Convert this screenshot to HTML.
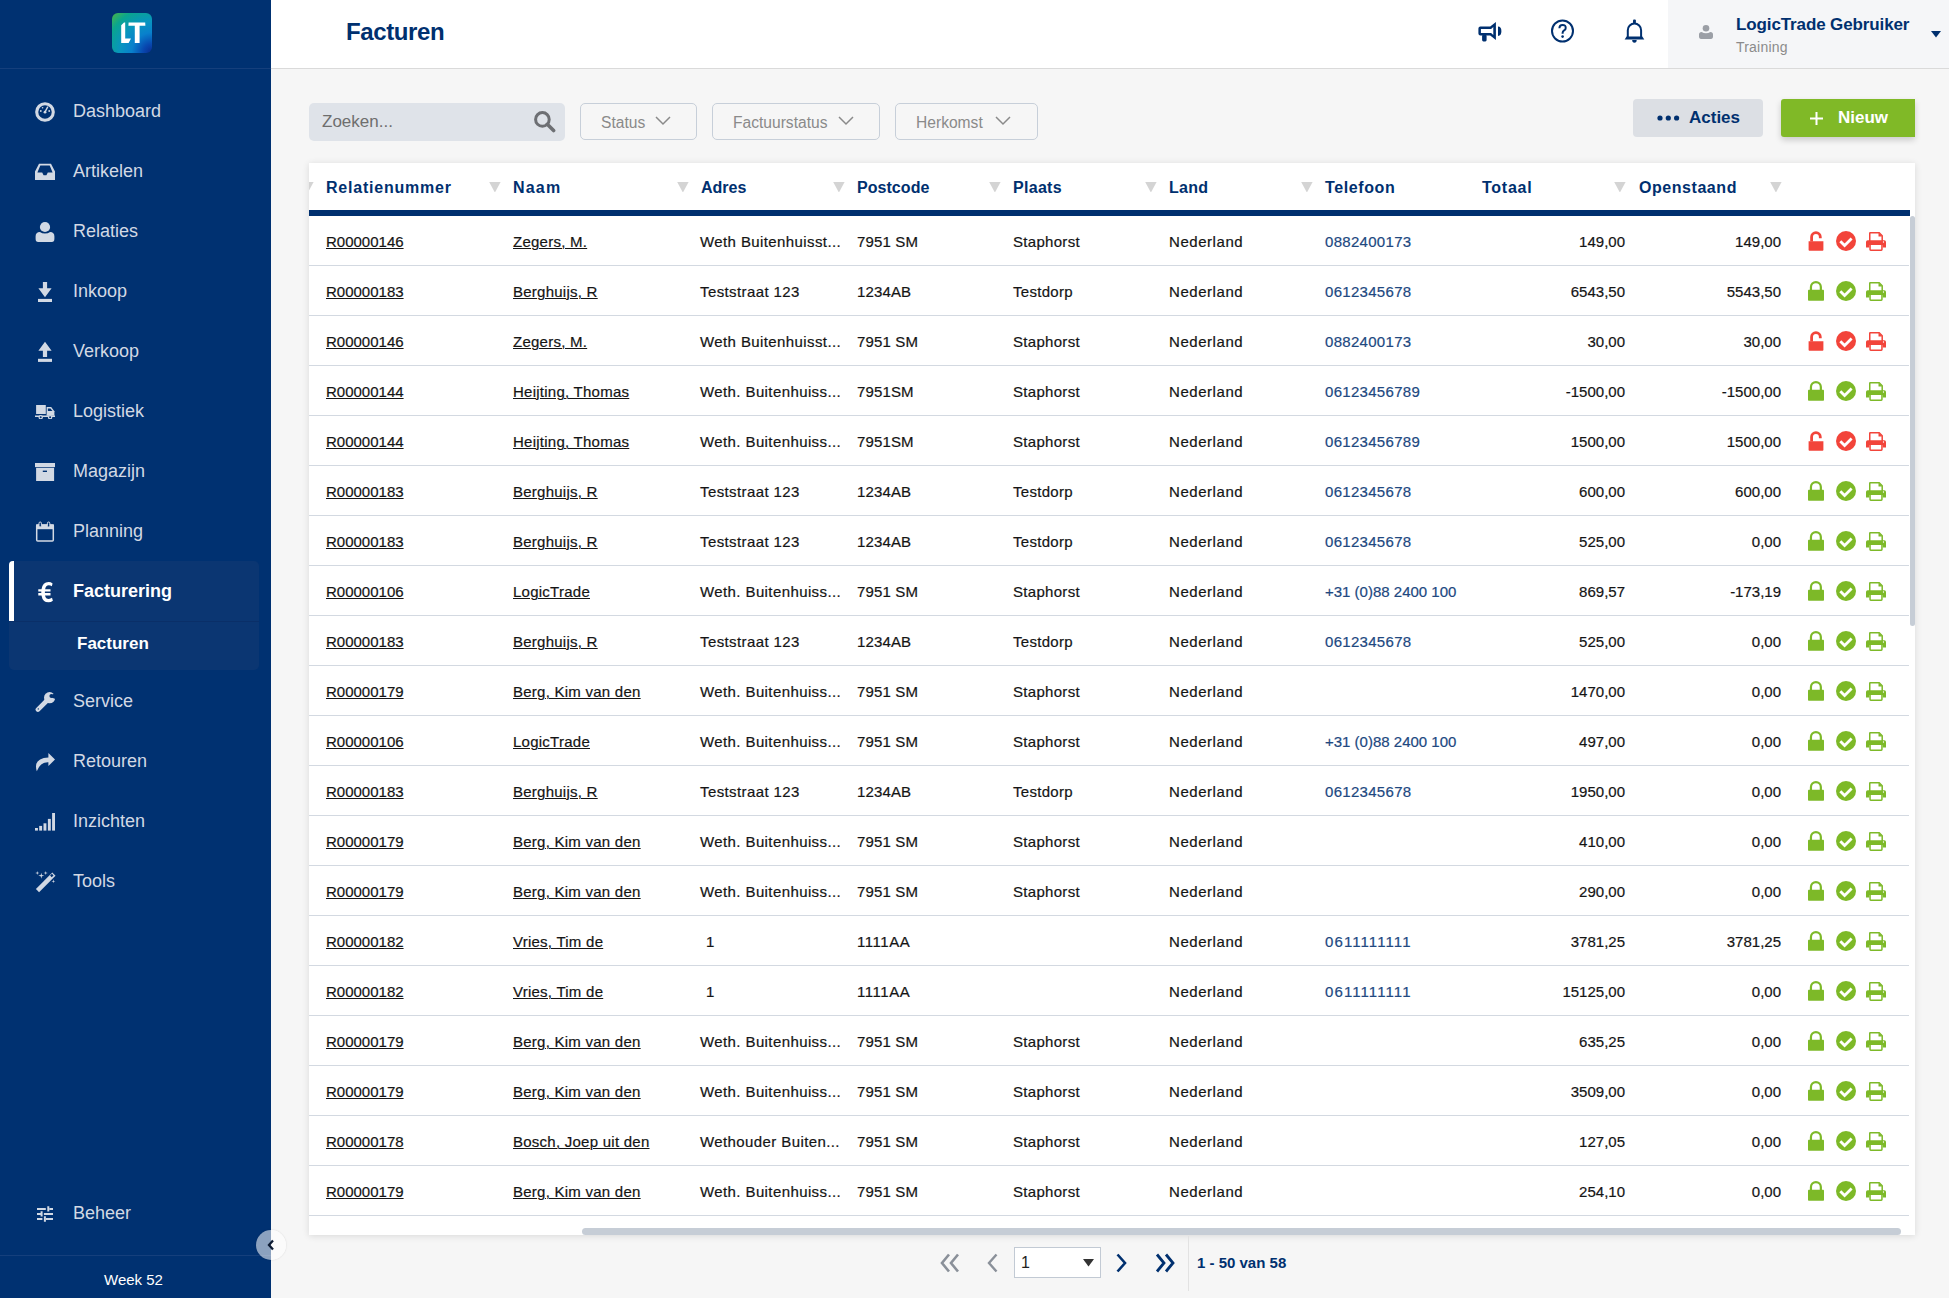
<!DOCTYPE html>
<html><head><meta charset="utf-8"><title>Facturen</title>
<style>
*{box-sizing:border-box;margin:0;padding:0}
html,body{width:1949px;height:1298px;overflow:hidden}
body{font-family:"Liberation Sans",sans-serif;background:#f6f6f6;position:relative;color:#1d1d1d}
.abs{position:absolute}
#side{position:absolute;left:0;top:0;width:271px;height:1298px;background:#003171}
#side .sep{position:absolute;left:0;width:271px;height:1px;background:#153f7c}
.nav{position:absolute;left:0;width:271px;height:60px;line-height:60px;font-size:18px;color:#d2d9e4;white-space:nowrap}
.nav .ico{position:absolute;left:35px;top:0;width:20px;height:60px;display:flex;align-items:center;justify-content:center}
.nav .lbl{position:absolute;left:73px;top:0}
#active{position:absolute;left:9px;top:561px;width:250px;height:109px;background:#0b3672;border-radius:5px}
#active .bar{position:absolute;left:0;top:0;width:5px;height:60px;background:#fff;border-radius:4px 0 0 0}
#active .sub{position:absolute;left:0;top:60px;width:250px;height:1px;background:#0a2f68}
#hdr{position:absolute;left:271px;top:0;width:1678px;height:69px;background:#fff;border-bottom:1px solid #dadada}
#user{position:absolute;left:1668px;top:0;width:281px;height:68px;background:#f5f6f8}
.flt{position:absolute}
#card{position:absolute;left:309px;top:163px;width:1606px;height:1072px;background:#fff;box-shadow:0 1px 7px rgba(0,0,0,.12)}
.th{position:absolute;top:164px;height:47px;line-height:47px;font-weight:700;font-size:16px;color:#00306f;white-space:nowrap}
.row{position:absolute;left:309px;width:1600px;height:50px;border-bottom:1px solid #d3d9e1}
.c{position:absolute;top:1px;height:49px;line-height:50px;font-size:15px;white-space:nowrap;color:#151515;-webkit-text-stroke:.2px currentColor}
.t{letter-spacing:.4px}
.u{text-decoration:underline;text-underline-offset:1px;text-decoration-thickness:1px}
.ph{color:#21487f}
.num{text-align:right}
.icos{position:absolute;top:0;height:49px}
.icos svg{position:absolute}
</style></head><body>

<div id="side">
<div class="abs" style="left:112px;top:13px;width:40px;height:40px;border-radius:6px;background:radial-gradient(circle at 100% 100%, #0a2a8c 0%, #0848b0 16%, #0880cc 36%, #0894c0 56%, #0aa58e 80%, #4cb444 100%)"></div>
<svg class="abs" style="left:120px;top:21px" width="26" height="23" viewBox="0 0 26 23"><path d="M1.2 4.2L4 1.4H5.2V17.5h5.8L8.6 21.9H1.2z" fill="#fff"/><path d="M8.6 1.4h16.6l0.2 3.4h-5.8v17.1h-4.8V4.8H8.4z" fill="#fff"/></svg>
<div class="sep" style="top:68px"></div>
<div id="active"><div class="bar"></div><div class="sub"></div></div>
<div class="nav" style="top:81px;"><div class="lbl">Dashboard</div></div>
<div class="nav" style="top:141px;"><div class="lbl">Artikelen</div></div>
<div class="nav" style="top:201px;"><div class="lbl">Relaties</div></div>
<div class="nav" style="top:261px;"><div class="lbl">Inkoop</div></div>
<div class="nav" style="top:321px;"><div class="lbl">Verkoop</div></div>
<div class="nav" style="top:381px;"><div class="lbl">Logistiek</div></div>
<div class="nav" style="top:441px;"><div class="lbl">Magazijn</div></div>
<div class="nav" style="top:501px;"><div class="lbl">Planning</div></div>
<div class="nav" style="top:561px;color:#fff;font-weight:700;"><div class="lbl">Facturering</div></div>
<div class="nav" style="top:671px;"><div class="lbl">Service</div></div>
<div class="nav" style="top:731px;"><div class="lbl">Retouren</div></div>
<div class="nav" style="top:791px;"><div class="lbl">Inzichten</div></div>
<div class="nav" style="top:851px;"><div class="lbl">Tools</div></div>
<div class="nav" style="top:1183px;"><div class="lbl">Beheer</div></div>
<svg class="abs" style="left:35px;top:102px" width="20" height="20" viewBox="0 0 20 20"><circle cx="10" cy="10" r="8.3" fill="none" stroke="#d2d9e4" stroke-width="3.1"/><path d="M12.6 5.2L10.2 9.6" stroke="#d2d9e4" stroke-width="1.4" stroke-linecap="round"/><circle cx="10" cy="10.2" r="1.4" fill="#d2d9e4"/><circle cx="5.8" cy="9" r=".9" fill="#d2d9e4"/><circle cx="14.2" cy="9" r=".9" fill="#d2d9e4"/><circle cx="7.6" cy="5.8" r=".8" fill="#d2d9e4"/></svg>
<svg class="abs" style="left:35px;top:163px" width="20" height="18" viewBox="0 0 20 18"><path d="M4 0.7h12L20 8.5V17H0V8.5z M5.3 2.6L2.4 9.6h4.8l1.4 2.6h2.8l1.4-2.6h4.8L14.7 2.6z" fill="#d2d9e4" fill-rule="evenodd"/></svg>
<svg class="abs" style="left:35px;top:221px" width="20" height="22" viewBox="0 0 20 22"><circle cx="10" cy="6" r="5.1" fill="#d2d9e4"/><path d="M0.6 15.5q0-4.5 4.3-4.5 2.2 1.6 5.1 1.6t5.1-1.6q4.3 0 4.3 4.5v2.3q0 3.2-2.6 3.2H3.2Q0.6 21 0.6 17.8z" fill="#d2d9e4"/></svg>
<svg class="abs" style="left:38px;top:281px" width="14" height="22" viewBox="0 0 14 22"><path d="M4.9 0.9h4.2v6.3h4.5L7 16.2 0.4 7.2h4.5z" fill="#d2d9e4"/><rect x="0" y="17.9" width="14" height="3.1" fill="#d2d9e4"/></svg>
<svg class="abs" style="left:38px;top:341px" width="14" height="22" viewBox="0 0 14 22"><path d="M7 0.8l6.6 9H9.1v6.3H4.9V9.8H0.4z" fill="#d2d9e4"/><rect x="0" y="17.8" width="14" height="3.1" fill="#d2d9e4"/></svg>
<svg class="abs" style="left:35px;top:404px" width="20" height="15" viewBox="0 0 20 15"><rect x="1.1" y="1" width="9.7" height="9" fill="#d2d9e4"/><path d="M11.6 3.1h4.6l3.2 4.2V11.8H11.6z" fill="#d2d9e4"/><path d="M12.9 4.5h2.6l2 2.6h-4.6z" fill="#003171"/><rect x="0" y="11.5" width="20" height="1.5" fill="#d2d9e4"/><circle cx="5.7" cy="13.2" r="1.6" fill="#003171" stroke="#d2d9e4" stroke-width="1.2"/><circle cx="15.1" cy="13.2" r="1.6" fill="#003171" stroke="#d2d9e4" stroke-width="1.2"/></svg>
<svg class="abs" style="left:35px;top:463px" width="20" height="18" viewBox="0 0 20 18"><rect x="0" y="0" width="20" height="4.1" fill="#d2d9e4"/><rect x="1.1" y="4.8" width="18" height="13.2" fill="#d2d9e4"/><rect x="7.8" y="7.6" width="4.2" height="1.4" fill="#003171"/></svg>
<svg class="abs" style="left:35px;top:521px" width="20" height="21" viewBox="0 0 20 21"><rect x="1.7" y="4" width="16.6" height="16" rx="1" fill="none" stroke="#d2d9e4" stroke-width="1.5"/><rect x="1" y="3.4" width="18" height="4.8" fill="#d2d9e4"/><rect x="4" y="1" width="2.4" height="5" rx="1.2" fill="#003171" stroke="#d2d9e4" stroke-width="1"/><rect x="12.4" y="1" width="2.4" height="5" rx="1.2" fill="#003171" stroke="#d2d9e4" stroke-width="1"/></svg>
<svg class="abs" style="left:37px;top:581px" width="17" height="22" viewBox="0 0 17 22"><path d="M15.6 2.4Q13.9 1 11.6 1 5.6 1 4.5 8.2H1.3v2.4h3V12H1.3v2.4h3.2q1.1 6.9 7.1 6.9 2.4 0 4.3-1.5l-.9-3q-1.5 1.1-3.2 1.1-3.1 0-3.8-3.5h5.5V12H7.9v-1.4h5.6V8.2H8.1q.7-3.9 3.7-3.9 1.6 0 3 1z" fill="#fff"/></svg>
<svg class="abs" style="left:35px;top:691px" width="21" height="22" viewBox="0 0 21 22"><circle cx="14.6" cy="6.7" r="5.6" fill="#d2d9e4"/><path d="M15.4 5.9l5.6-5.6v8z" fill="#003171"/><circle cx="16.5" cy="5" r="2.1" fill="#003171"/><path d="M12.5 9L2.9 18.6" stroke="#d2d9e4" stroke-width="4.6" stroke-linecap="round"/><circle cx="3.3" cy="17.9" r=".7" fill="#003171"/></svg>
<svg class="abs" style="left:35px;top:753px" width="20" height="19" viewBox="0 0 20 19"><path d="M13.4 0L20 6.6 13.4 13V9.2Q5.3 8.8 1.8 18.2 -2.2 5.2 13.4 4.4z" fill="#d2d9e4"/></svg>
<svg class="abs" style="left:35px;top:813px" width="20" height="18" viewBox="0 0 20 18"><rect x="0" y="15" width="2.9" height="2.6" fill="#d2d9e4"/><rect x="4.2" y="12.9" width="2.9" height="4.7" fill="#d2d9e4"/><rect x="8.5" y="10.3" width="2.9" height="7.3" fill="#d2d9e4"/><rect x="12.9" y="5.9" width="2.9" height="11.7" fill="#d2d9e4"/><rect x="17.1" y="0" width="2.9" height="17.6" fill="#d2d9e4"/></svg>
<svg class="abs" style="left:35px;top:870px" width="21" height="23" viewBox="0 0 21 23"><path d="M17.3 2.6l3.2 3.2L4.1 22.2 0.9 19z" fill="#d2d9e4"/><path d="M15.1 5.6l1.8-1.8 1.6 1.6-1.8 1.8z" fill="#003171"/><path d="M6.3 2.7l.6 2.4 2.4.6-2.4.6-.6 2.4-.6-2.4-2.4-.6 2.4-.6z M2.3 1l.4 1.6 1.6.4-1.6.4-.4 1.6-.4-1.6L.3 3l1.6-.4z M10.7 1l.4 1.6 1.6.4-1.6.4-.4 1.6-.4-1.6L8.7 3l1.6-.4z M18.4 9.3l.4 1.6 1.6.4-1.6.4-.4 1.6-.4-1.6-1.6-.4 1.6-.4z" fill="#d2d9e4"/></svg>
<svg class="abs" style="left:37px;top:1206px" width="16" height="16" viewBox="0 0 16 16"><path d="M0 3h8.8M12.3 3H16M0 8h4.6M6.9 8H16M0 13h5.4M9 13H16" stroke="#d2d9e4" stroke-width="2"/><path d="M11.3 0.2v5.4M4.6 5.3v5.3M7.9 10.3v5.5" stroke="#d2d9e4" stroke-width="2"/></svg>
<div class="abs" style="left:77px;top:620px;height:48px;line-height:48px;font-size:17px;font-weight:700;color:#fff">Facturen</div>
<div class="sep" style="top:1255px"></div>
<div class="abs" style="left:104px;top:1259px;height:42px;line-height:42px;font-size:15px;color:#fff">Week 52</div>
</div>
<div class="abs" style="left:256px;top:1230px;width:30px;height:30px;border-radius:50%;background:rgba(255,255,255,.55);box-shadow:0 0 2px rgba(0,0,0,.15)"></div>
<div class="abs" style="left:271px;top:1230px;width:15px;height:30px;border-radius:0 15px 15px 0;background:#fbfbfb"></div>
<svg class="abs" style="left:266px;top:1239px" width="9" height="12" viewBox="0 0 9 12"><path d="M7 1.6L3 6 7 10.4" fill="none" stroke="#0d1b33" stroke-width="2.3"/></svg>
<div id="hdr"></div>
<div class="abs" style="left:346px;top:10px;height:44px;line-height:44px;font-size:24px;font-weight:700;color:#00306f;letter-spacing:-0.4px">Facturen</div>
<svg class="abs" style="left:1474px;top:16px" width="30" height="30" viewBox="0 0 30 30"><path d="M4.4 12.4Q4.4 10.4 6.4 10.4H16.2L21.9 6V24L16.2 19.4H6.4Q4.4 19.4 4.4 17.4z M6.9 12.9H17.1L19.3 11.1V18.9L17.1 17.1H6.9z" fill="#00306f" fill-rule="evenodd"/><rect x="8.1" y="18.8" width="4.5" height="6.6" rx="1.3" fill="#00306f"/><path d="M24 10.6A3.4 4.65 0 0 1 24 19.9z" fill="#00306f"/></svg>
<svg class="abs" style="left:1551px;top:19px" width="24" height="24" viewBox="0 0 24 24"><circle cx="11.5" cy="12" r="10.5" fill="none" stroke="#00306f" stroke-width="2"/><path d="M8.4 9.2q0-3.3 3.2-3.3t3.1 3q0 1.6-1.6 2.5-1.5.9-1.5 2.6v.8" fill="none" stroke="#00306f" stroke-width="2"/><circle cx="11.6" cy="17.6" r="1.3" fill="#00306f"/></svg>
<svg class="abs" style="left:1624px;top:19px" width="21" height="24" viewBox="0 0 21 24"><rect x="9" y="0.6" width="2.9" height="4" rx="1" fill="#00306f"/><path d="M3.8 18.5V11.15A6.65 6.65 0 0 1 17.1 11.15V18.5" fill="none" stroke="#00306f" stroke-width="2"/><path d="M0.6 20.4L2.6 17.6H18.3L20.3 20.4z" fill="#00306f"/><path d="M8.2 21H12.7Q12.7 23.8 10.45 23.8 8.2 23.8 8.2 21z" fill="#00306f"/></svg>
<div id="user"></div>
<svg class="abs" style="left:1699px;top:25px" width="14" height="14" viewBox="0 0 14 14"><circle cx="7" cy="3.3" r="3.3" fill="#9b9fa6"/><path d="M0 9.5q0-2.6 2.6-2.6 2 1.3 4.4 1.3t4.4-1.3Q14 6.9 14 9.5v2.6q0 1.8-1.8 1.8H1.8Q0 13.9 0 12.1z" fill="#9b9fa6"/></svg>
<div class="abs" style="left:1736px;top:13px;height:24px;line-height:24px;font-size:17px;font-weight:700;color:#00306f;white-space:nowrap;letter-spacing:-.12px">LogicTrade Gebruiker</div>
<div class="abs" style="left:1736px;top:37px;height:20px;line-height:20px;font-size:14px;color:#8b8b8b;letter-spacing:.2px">Training</div>
<svg class="abs" style="left:1931px;top:31px" width="10" height="7" viewBox="0 0 10 7"><path d="M0 0h10L5 6.5z" fill="#00306f"/></svg>
<div class="abs" style="left:309px;top:103px;width:256px;height:38px;border-radius:5px;background:#dfe3e9"></div>
<div class="abs" style="left:322px;top:103px;height:38px;line-height:38px;font-size:17px;color:#6e6e6e">Zoeken...</div>
<svg class="abs" style="left:534px;top:111px" width="22" height="22" viewBox="0 0 22 22"><circle cx="8.4" cy="8.4" r="6.8" fill="none" stroke="#6d6f73" stroke-width="3"/><path d="M13.3 13.3l6.3 6.3" stroke="#6d6f73" stroke-width="3.6" stroke-linecap="round"/></svg>
<div class="abs" style="left:580px;top:103px;width:117px;height:37px;border:1px solid #c7cfd9;border-radius:5px"></div>
<div class="abs dd" style="left:601px;top:104px;height:37px;line-height:37px;font-size:15.6px;color:#8a8a8a">Status</div>
<div class="abs" style="left:712px;top:103px;width:168px;height:37px;border:1px solid #c7cfd9;border-radius:5px"></div>
<div class="abs dd" style="left:733px;top:104px;height:37px;line-height:37px;font-size:15.6px;color:#8a8a8a">Factuurstatus</div>
<div class="abs" style="left:895px;top:103px;width:143px;height:37px;border:1px solid #c7cfd9;border-radius:5px"></div>
<div class="abs dd" style="left:916px;top:104px;height:37px;line-height:37px;font-size:15.6px;color:#8a8a8a">Herkomst</div>
<svg class="abs" style="left:655px;top:116px" width="16" height="10" viewBox="0 0 16 10"><path d="M1 1l7 7 7-7" fill="none" stroke="#8a8a8a" stroke-width="1.5"/></svg>
<svg class="abs" style="left:838px;top:116px" width="16" height="10" viewBox="0 0 16 10"><path d="M1 1l7 7 7-7" fill="none" stroke="#8a8a8a" stroke-width="1.5"/></svg>
<svg class="abs" style="left:995px;top:116px" width="16" height="10" viewBox="0 0 16 10"><path d="M1 1l7 7 7-7" fill="none" stroke="#8a8a8a" stroke-width="1.5"/></svg>
<div class="abs" style="left:1633px;top:99px;width:130px;height:38px;border-radius:4px;background:#dcdfe4"></div>
<svg class="abs" style="left:1657px;top:115px" width="23" height="6" viewBox="0 0 23 6"><circle cx="3" cy="3" r="2.6" fill="#00306f"/><circle cx="11.3" cy="3" r="2.6" fill="#00306f"/><circle cx="19.6" cy="3" r="2.6" fill="#00306f"/></svg>
<div class="abs" style="left:1689px;top:99px;height:38px;line-height:38px;font-size:17px;font-weight:700;color:#00306f">Acties</div>
<div class="abs" style="left:1781px;top:99px;width:134px;height:38px;border-radius:3px 0 0 3px;background:#80b927;box-shadow:0 3px 6px rgba(0,0,0,.18)"></div>
<svg class="abs" style="left:1810px;top:112px" width="13" height="13" viewBox="0 0 13 13"><path d="M6.5 0v13M0 6.5h13" stroke="#fff" stroke-width="2"/></svg>
<div class="abs" style="left:1838px;top:99px;height:38px;line-height:38px;font-size:17px;font-weight:700;color:#fff">Nieuw</div>
<div id="card"></div>
<div class="abs" style="left:309px;top:182px;width:6px;height:12px;overflow:hidden"><svg style="position:absolute;left:-7px;top:0" width="12" height="11" viewBox="0 0 12 11"><path d="M0.2 0h11.4L5.9 10.6z" fill="#d4d4d4"/></svg></div>
<div class="th" style="left:326px;letter-spacing:0.78px">Relatienummer</div>
<div class="th" style="left:513px;letter-spacing:1.2px">Naam</div>
<div class="th" style="left:701px;letter-spacing:0px">Adres</div>
<div class="th" style="left:857px;letter-spacing:0.05px">Postcode</div>
<div class="th" style="left:1013px;letter-spacing:0.3px">Plaats</div>
<div class="th" style="left:1169px;letter-spacing:0.3px">Land</div>
<div class="th" style="left:1325px;letter-spacing:0.6px">Telefoon</div>
<div class="th" style="left:1482px;letter-spacing:0.75px">Totaal</div>
<div class="th" style="left:1639px;letter-spacing:0.55px">Openstaand</div>
<svg class="flt" style="left:489px;top:182px" width="12" height="10" viewBox="0 0 12 10"><path d="M0.2 0h11.4L5.9 10.6z" fill="#d4d4d4"/></svg>
<svg class="flt" style="left:677px;top:182px" width="12" height="10" viewBox="0 0 12 10"><path d="M0.2 0h11.4L5.9 10.6z" fill="#d4d4d4"/></svg>
<svg class="flt" style="left:833px;top:182px" width="12" height="10" viewBox="0 0 12 10"><path d="M0.2 0h11.4L5.9 10.6z" fill="#d4d4d4"/></svg>
<svg class="flt" style="left:989px;top:182px" width="12" height="10" viewBox="0 0 12 10"><path d="M0.2 0h11.4L5.9 10.6z" fill="#d4d4d4"/></svg>
<svg class="flt" style="left:1145px;top:182px" width="12" height="10" viewBox="0 0 12 10"><path d="M0.2 0h11.4L5.9 10.6z" fill="#d4d4d4"/></svg>
<svg class="flt" style="left:1301px;top:182px" width="12" height="10" viewBox="0 0 12 10"><path d="M0.2 0h11.4L5.9 10.6z" fill="#d4d4d4"/></svg>
<svg class="flt" style="left:1614px;top:182px" width="12" height="10" viewBox="0 0 12 10"><path d="M0.2 0h11.4L5.9 10.6z" fill="#d4d4d4"/></svg>
<svg class="flt" style="left:1770px;top:182px" width="12" height="10" viewBox="0 0 12 10"><path d="M0.2 0h11.4L5.9 10.6z" fill="#d4d4d4"/></svg>
<div class="abs" style="left:309px;top:210px;width:1601px;height:6px;background:#00306f"></div>
<div class="row" style="top:216px"><span class="c u" style="left:17px">R00000146</span><span class="c u t" style="left:204px;letter-spacing:.25px">Zegers, M.</span><span class="c t" style="left:391px">Weth Buitenhuisst...</span><span class="c" style="left:548px;letter-spacing:.15px">7951 SM</span><span class="c t" style="left:704px;letter-spacing:.3px">Staphorst</span><span class="c t" style="left:860px;letter-spacing:.55px">Nederland</span><span class="c ph" style="left:1016px;letter-spacing:.3px">0882400173</span><span class="c num" style="left:1159px;width:157px">149,00</span><span class="c num" style="left:1315px;width:157px">149,00</span><div class="icos" style="left:1499px;width:90px"><svg style="left:0;top:15px" width="16" height="20" viewBox="0 0 16 20"><path d="M3.6 10.5V5.95A4.35 4.35 0 0 1 12.3 5.95V7.2" fill="none" stroke="#f2443a" stroke-width="2.8"/><path d="M0.6 10.2H15.4V19q0 .8-.8.8H1.4q-.8 0-.8-.8z" fill="#f2443a"/></svg><div style="position:absolute;left:28px;top:15px"><svg width="20" height="20" viewBox="0 0 20 20"><circle cx="10" cy="10" r="10" fill="#f2443a"/><path d="M4.3 10.2l4.3 4.3 7-7" fill="none" stroke="#fff" stroke-width="2.8"/></svg></div><div style="position:absolute;left:58px;top:15.5px"><svg width="20" height="19" viewBox="0 0 20 19"><path d="M3.75 9V1.2Q3.75.75 4.2.75H13.2L16.2 3.75V9" fill="none" stroke="#f2443a" stroke-width="1.5"/><path d="M12.5.75V4.4H16.2z" fill="#f2443a"/><path d="M0 10Q0 8.3 1.7 8.3H18.3Q20 8.3 20 10V15.4H16.7V13H3.3V15.4H0z" fill="#f2443a"/><circle cx="17.5" cy="10" r=".65" fill="#fff"/><path d="M4.05 13V17.6Q4.05 18.25 4.7 18.25H15.3Q15.95 18.25 15.95 17.6V13" fill="none" stroke="#f2443a" stroke-width="1.5"/></svg></div></div></div>
<div class="row" style="top:266px"><span class="c u" style="left:17px">R00000183</span><span class="c u t" style="left:204px;letter-spacing:.25px">Berghuijs, R</span><span class="c t" style="left:391px">Teststraat 123</span><span class="c" style="left:548px;letter-spacing:.15px">1234AB</span><span class="c t" style="left:704px;letter-spacing:.3px">Testdorp</span><span class="c t" style="left:860px;letter-spacing:.55px">Nederland</span><span class="c ph" style="left:1016px;letter-spacing:.3px">0612345678</span><span class="c num" style="left:1159px;width:157px">6543,50</span><span class="c num" style="left:1315px;width:157px">5543,50</span><div class="icos" style="left:1499px;width:90px"><svg style="left:0;top:15px" width="16" height="20" viewBox="0 0 16 20"><path d="M2.95 9.5V6.1A4.95 4.95 0 0 1 12.85 6.1V9.5" fill="none" stroke="#7db928" stroke-width="2.2"/><path d="M0 9.5Q0 8.7.8 8.7H15.2Q16 8.7 16 9.5V19q0 .8-.8.8H.8Q0 19.8 0 19z" fill="#7db928"/></svg><div style="position:absolute;left:28px;top:15px"><svg width="20" height="20" viewBox="0 0 20 20"><circle cx="10" cy="10" r="10" fill="#7db928"/><path d="M4.3 10.2l4.3 4.3 7-7" fill="none" stroke="#fff" stroke-width="2.8"/></svg></div><div style="position:absolute;left:58px;top:15.5px"><svg width="20" height="19" viewBox="0 0 20 19"><path d="M3.75 9V1.2Q3.75.75 4.2.75H13.2L16.2 3.75V9" fill="none" stroke="#7db928" stroke-width="1.5"/><path d="M12.5.75V4.4H16.2z" fill="#7db928"/><path d="M0 10Q0 8.3 1.7 8.3H18.3Q20 8.3 20 10V15.4H16.7V13H3.3V15.4H0z" fill="#7db928"/><circle cx="17.5" cy="10" r=".65" fill="#fff"/><path d="M4.05 13V17.6Q4.05 18.25 4.7 18.25H15.3Q15.95 18.25 15.95 17.6V13" fill="none" stroke="#7db928" stroke-width="1.5"/></svg></div></div></div>
<div class="row" style="top:316px"><span class="c u" style="left:17px">R00000146</span><span class="c u t" style="left:204px;letter-spacing:.25px">Zegers, M.</span><span class="c t" style="left:391px">Weth Buitenhuisst...</span><span class="c" style="left:548px;letter-spacing:.15px">7951 SM</span><span class="c t" style="left:704px;letter-spacing:.3px">Staphorst</span><span class="c t" style="left:860px;letter-spacing:.55px">Nederland</span><span class="c ph" style="left:1016px;letter-spacing:.3px">0882400173</span><span class="c num" style="left:1159px;width:157px">30,00</span><span class="c num" style="left:1315px;width:157px">30,00</span><div class="icos" style="left:1499px;width:90px"><svg style="left:0;top:15px" width="16" height="20" viewBox="0 0 16 20"><path d="M3.6 10.5V5.95A4.35 4.35 0 0 1 12.3 5.95V7.2" fill="none" stroke="#f2443a" stroke-width="2.8"/><path d="M0.6 10.2H15.4V19q0 .8-.8.8H1.4q-.8 0-.8-.8z" fill="#f2443a"/></svg><div style="position:absolute;left:28px;top:15px"><svg width="20" height="20" viewBox="0 0 20 20"><circle cx="10" cy="10" r="10" fill="#f2443a"/><path d="M4.3 10.2l4.3 4.3 7-7" fill="none" stroke="#fff" stroke-width="2.8"/></svg></div><div style="position:absolute;left:58px;top:15.5px"><svg width="20" height="19" viewBox="0 0 20 19"><path d="M3.75 9V1.2Q3.75.75 4.2.75H13.2L16.2 3.75V9" fill="none" stroke="#f2443a" stroke-width="1.5"/><path d="M12.5.75V4.4H16.2z" fill="#f2443a"/><path d="M0 10Q0 8.3 1.7 8.3H18.3Q20 8.3 20 10V15.4H16.7V13H3.3V15.4H0z" fill="#f2443a"/><circle cx="17.5" cy="10" r=".65" fill="#fff"/><path d="M4.05 13V17.6Q4.05 18.25 4.7 18.25H15.3Q15.95 18.25 15.95 17.6V13" fill="none" stroke="#f2443a" stroke-width="1.5"/></svg></div></div></div>
<div class="row" style="top:366px"><span class="c u" style="left:17px">R00000144</span><span class="c u t" style="left:204px;letter-spacing:.25px">Heijting, Thomas</span><span class="c t" style="left:391px">Weth. Buitenhuiss...</span><span class="c" style="left:548px;letter-spacing:.15px">7951SM</span><span class="c t" style="left:704px;letter-spacing:.3px">Staphorst</span><span class="c t" style="left:860px;letter-spacing:.55px">Nederland</span><span class="c ph" style="left:1016px;letter-spacing:.3px">06123456789</span><span class="c num" style="left:1159px;width:157px">-1500,00</span><span class="c num" style="left:1315px;width:157px">-1500,00</span><div class="icos" style="left:1499px;width:90px"><svg style="left:0;top:15px" width="16" height="20" viewBox="0 0 16 20"><path d="M2.95 9.5V6.1A4.95 4.95 0 0 1 12.85 6.1V9.5" fill="none" stroke="#7db928" stroke-width="2.2"/><path d="M0 9.5Q0 8.7.8 8.7H15.2Q16 8.7 16 9.5V19q0 .8-.8.8H.8Q0 19.8 0 19z" fill="#7db928"/></svg><div style="position:absolute;left:28px;top:15px"><svg width="20" height="20" viewBox="0 0 20 20"><circle cx="10" cy="10" r="10" fill="#7db928"/><path d="M4.3 10.2l4.3 4.3 7-7" fill="none" stroke="#fff" stroke-width="2.8"/></svg></div><div style="position:absolute;left:58px;top:15.5px"><svg width="20" height="19" viewBox="0 0 20 19"><path d="M3.75 9V1.2Q3.75.75 4.2.75H13.2L16.2 3.75V9" fill="none" stroke="#7db928" stroke-width="1.5"/><path d="M12.5.75V4.4H16.2z" fill="#7db928"/><path d="M0 10Q0 8.3 1.7 8.3H18.3Q20 8.3 20 10V15.4H16.7V13H3.3V15.4H0z" fill="#7db928"/><circle cx="17.5" cy="10" r=".65" fill="#fff"/><path d="M4.05 13V17.6Q4.05 18.25 4.7 18.25H15.3Q15.95 18.25 15.95 17.6V13" fill="none" stroke="#7db928" stroke-width="1.5"/></svg></div></div></div>
<div class="row" style="top:416px"><span class="c u" style="left:17px">R00000144</span><span class="c u t" style="left:204px;letter-spacing:.25px">Heijting, Thomas</span><span class="c t" style="left:391px">Weth. Buitenhuiss...</span><span class="c" style="left:548px;letter-spacing:.15px">7951SM</span><span class="c t" style="left:704px;letter-spacing:.3px">Staphorst</span><span class="c t" style="left:860px;letter-spacing:.55px">Nederland</span><span class="c ph" style="left:1016px;letter-spacing:.3px">06123456789</span><span class="c num" style="left:1159px;width:157px">1500,00</span><span class="c num" style="left:1315px;width:157px">1500,00</span><div class="icos" style="left:1499px;width:90px"><svg style="left:0;top:15px" width="16" height="20" viewBox="0 0 16 20"><path d="M3.6 10.5V5.95A4.35 4.35 0 0 1 12.3 5.95V7.2" fill="none" stroke="#f2443a" stroke-width="2.8"/><path d="M0.6 10.2H15.4V19q0 .8-.8.8H1.4q-.8 0-.8-.8z" fill="#f2443a"/></svg><div style="position:absolute;left:28px;top:15px"><svg width="20" height="20" viewBox="0 0 20 20"><circle cx="10" cy="10" r="10" fill="#f2443a"/><path d="M4.3 10.2l4.3 4.3 7-7" fill="none" stroke="#fff" stroke-width="2.8"/></svg></div><div style="position:absolute;left:58px;top:15.5px"><svg width="20" height="19" viewBox="0 0 20 19"><path d="M3.75 9V1.2Q3.75.75 4.2.75H13.2L16.2 3.75V9" fill="none" stroke="#f2443a" stroke-width="1.5"/><path d="M12.5.75V4.4H16.2z" fill="#f2443a"/><path d="M0 10Q0 8.3 1.7 8.3H18.3Q20 8.3 20 10V15.4H16.7V13H3.3V15.4H0z" fill="#f2443a"/><circle cx="17.5" cy="10" r=".65" fill="#fff"/><path d="M4.05 13V17.6Q4.05 18.25 4.7 18.25H15.3Q15.95 18.25 15.95 17.6V13" fill="none" stroke="#f2443a" stroke-width="1.5"/></svg></div></div></div>
<div class="row" style="top:466px"><span class="c u" style="left:17px">R00000183</span><span class="c u t" style="left:204px;letter-spacing:.25px">Berghuijs, R</span><span class="c t" style="left:391px">Teststraat 123</span><span class="c" style="left:548px;letter-spacing:.15px">1234AB</span><span class="c t" style="left:704px;letter-spacing:.3px">Testdorp</span><span class="c t" style="left:860px;letter-spacing:.55px">Nederland</span><span class="c ph" style="left:1016px;letter-spacing:.3px">0612345678</span><span class="c num" style="left:1159px;width:157px">600,00</span><span class="c num" style="left:1315px;width:157px">600,00</span><div class="icos" style="left:1499px;width:90px"><svg style="left:0;top:15px" width="16" height="20" viewBox="0 0 16 20"><path d="M2.95 9.5V6.1A4.95 4.95 0 0 1 12.85 6.1V9.5" fill="none" stroke="#7db928" stroke-width="2.2"/><path d="M0 9.5Q0 8.7.8 8.7H15.2Q16 8.7 16 9.5V19q0 .8-.8.8H.8Q0 19.8 0 19z" fill="#7db928"/></svg><div style="position:absolute;left:28px;top:15px"><svg width="20" height="20" viewBox="0 0 20 20"><circle cx="10" cy="10" r="10" fill="#7db928"/><path d="M4.3 10.2l4.3 4.3 7-7" fill="none" stroke="#fff" stroke-width="2.8"/></svg></div><div style="position:absolute;left:58px;top:15.5px"><svg width="20" height="19" viewBox="0 0 20 19"><path d="M3.75 9V1.2Q3.75.75 4.2.75H13.2L16.2 3.75V9" fill="none" stroke="#7db928" stroke-width="1.5"/><path d="M12.5.75V4.4H16.2z" fill="#7db928"/><path d="M0 10Q0 8.3 1.7 8.3H18.3Q20 8.3 20 10V15.4H16.7V13H3.3V15.4H0z" fill="#7db928"/><circle cx="17.5" cy="10" r=".65" fill="#fff"/><path d="M4.05 13V17.6Q4.05 18.25 4.7 18.25H15.3Q15.95 18.25 15.95 17.6V13" fill="none" stroke="#7db928" stroke-width="1.5"/></svg></div></div></div>
<div class="row" style="top:516px"><span class="c u" style="left:17px">R00000183</span><span class="c u t" style="left:204px;letter-spacing:.25px">Berghuijs, R</span><span class="c t" style="left:391px">Teststraat 123</span><span class="c" style="left:548px;letter-spacing:.15px">1234AB</span><span class="c t" style="left:704px;letter-spacing:.3px">Testdorp</span><span class="c t" style="left:860px;letter-spacing:.55px">Nederland</span><span class="c ph" style="left:1016px;letter-spacing:.3px">0612345678</span><span class="c num" style="left:1159px;width:157px">525,00</span><span class="c num" style="left:1315px;width:157px">0,00</span><div class="icos" style="left:1499px;width:90px"><svg style="left:0;top:15px" width="16" height="20" viewBox="0 0 16 20"><path d="M2.95 9.5V6.1A4.95 4.95 0 0 1 12.85 6.1V9.5" fill="none" stroke="#7db928" stroke-width="2.2"/><path d="M0 9.5Q0 8.7.8 8.7H15.2Q16 8.7 16 9.5V19q0 .8-.8.8H.8Q0 19.8 0 19z" fill="#7db928"/></svg><div style="position:absolute;left:28px;top:15px"><svg width="20" height="20" viewBox="0 0 20 20"><circle cx="10" cy="10" r="10" fill="#7db928"/><path d="M4.3 10.2l4.3 4.3 7-7" fill="none" stroke="#fff" stroke-width="2.8"/></svg></div><div style="position:absolute;left:58px;top:15.5px"><svg width="20" height="19" viewBox="0 0 20 19"><path d="M3.75 9V1.2Q3.75.75 4.2.75H13.2L16.2 3.75V9" fill="none" stroke="#7db928" stroke-width="1.5"/><path d="M12.5.75V4.4H16.2z" fill="#7db928"/><path d="M0 10Q0 8.3 1.7 8.3H18.3Q20 8.3 20 10V15.4H16.7V13H3.3V15.4H0z" fill="#7db928"/><circle cx="17.5" cy="10" r=".65" fill="#fff"/><path d="M4.05 13V17.6Q4.05 18.25 4.7 18.25H15.3Q15.95 18.25 15.95 17.6V13" fill="none" stroke="#7db928" stroke-width="1.5"/></svg></div></div></div>
<div class="row" style="top:566px"><span class="c u" style="left:17px">R00000106</span><span class="c u t" style="left:204px;letter-spacing:.25px">LogicTrade</span><span class="c t" style="left:391px">Weth. Buitenhuiss...</span><span class="c" style="left:548px;letter-spacing:.15px">7951 SM</span><span class="c t" style="left:704px;letter-spacing:.3px">Staphorst</span><span class="c t" style="left:860px;letter-spacing:.55px">Nederland</span><span class="c ph" style="left:1016px;letter-spacing:0px">+31 (0)88 2400 100</span><span class="c num" style="left:1159px;width:157px">869,57</span><span class="c num" style="left:1315px;width:157px">-173,19</span><div class="icos" style="left:1499px;width:90px"><svg style="left:0;top:15px" width="16" height="20" viewBox="0 0 16 20"><path d="M2.95 9.5V6.1A4.95 4.95 0 0 1 12.85 6.1V9.5" fill="none" stroke="#7db928" stroke-width="2.2"/><path d="M0 9.5Q0 8.7.8 8.7H15.2Q16 8.7 16 9.5V19q0 .8-.8.8H.8Q0 19.8 0 19z" fill="#7db928"/></svg><div style="position:absolute;left:28px;top:15px"><svg width="20" height="20" viewBox="0 0 20 20"><circle cx="10" cy="10" r="10" fill="#7db928"/><path d="M4.3 10.2l4.3 4.3 7-7" fill="none" stroke="#fff" stroke-width="2.8"/></svg></div><div style="position:absolute;left:58px;top:15.5px"><svg width="20" height="19" viewBox="0 0 20 19"><path d="M3.75 9V1.2Q3.75.75 4.2.75H13.2L16.2 3.75V9" fill="none" stroke="#7db928" stroke-width="1.5"/><path d="M12.5.75V4.4H16.2z" fill="#7db928"/><path d="M0 10Q0 8.3 1.7 8.3H18.3Q20 8.3 20 10V15.4H16.7V13H3.3V15.4H0z" fill="#7db928"/><circle cx="17.5" cy="10" r=".65" fill="#fff"/><path d="M4.05 13V17.6Q4.05 18.25 4.7 18.25H15.3Q15.95 18.25 15.95 17.6V13" fill="none" stroke="#7db928" stroke-width="1.5"/></svg></div></div></div>
<div class="row" style="top:616px"><span class="c u" style="left:17px">R00000183</span><span class="c u t" style="left:204px;letter-spacing:.25px">Berghuijs, R</span><span class="c t" style="left:391px">Teststraat 123</span><span class="c" style="left:548px;letter-spacing:.15px">1234AB</span><span class="c t" style="left:704px;letter-spacing:.3px">Testdorp</span><span class="c t" style="left:860px;letter-spacing:.55px">Nederland</span><span class="c ph" style="left:1016px;letter-spacing:.3px">0612345678</span><span class="c num" style="left:1159px;width:157px">525,00</span><span class="c num" style="left:1315px;width:157px">0,00</span><div class="icos" style="left:1499px;width:90px"><svg style="left:0;top:15px" width="16" height="20" viewBox="0 0 16 20"><path d="M2.95 9.5V6.1A4.95 4.95 0 0 1 12.85 6.1V9.5" fill="none" stroke="#7db928" stroke-width="2.2"/><path d="M0 9.5Q0 8.7.8 8.7H15.2Q16 8.7 16 9.5V19q0 .8-.8.8H.8Q0 19.8 0 19z" fill="#7db928"/></svg><div style="position:absolute;left:28px;top:15px"><svg width="20" height="20" viewBox="0 0 20 20"><circle cx="10" cy="10" r="10" fill="#7db928"/><path d="M4.3 10.2l4.3 4.3 7-7" fill="none" stroke="#fff" stroke-width="2.8"/></svg></div><div style="position:absolute;left:58px;top:15.5px"><svg width="20" height="19" viewBox="0 0 20 19"><path d="M3.75 9V1.2Q3.75.75 4.2.75H13.2L16.2 3.75V9" fill="none" stroke="#7db928" stroke-width="1.5"/><path d="M12.5.75V4.4H16.2z" fill="#7db928"/><path d="M0 10Q0 8.3 1.7 8.3H18.3Q20 8.3 20 10V15.4H16.7V13H3.3V15.4H0z" fill="#7db928"/><circle cx="17.5" cy="10" r=".65" fill="#fff"/><path d="M4.05 13V17.6Q4.05 18.25 4.7 18.25H15.3Q15.95 18.25 15.95 17.6V13" fill="none" stroke="#7db928" stroke-width="1.5"/></svg></div></div></div>
<div class="row" style="top:666px"><span class="c u" style="left:17px">R00000179</span><span class="c u t" style="left:204px;letter-spacing:.25px">Berg, Kim van den</span><span class="c t" style="left:391px">Weth. Buitenhuiss...</span><span class="c" style="left:548px;letter-spacing:.15px">7951 SM</span><span class="c t" style="left:704px;letter-spacing:.3px">Staphorst</span><span class="c t" style="left:860px;letter-spacing:.55px">Nederland</span><span class="c num" style="left:1159px;width:157px">1470,00</span><span class="c num" style="left:1315px;width:157px">0,00</span><div class="icos" style="left:1499px;width:90px"><svg style="left:0;top:15px" width="16" height="20" viewBox="0 0 16 20"><path d="M2.95 9.5V6.1A4.95 4.95 0 0 1 12.85 6.1V9.5" fill="none" stroke="#7db928" stroke-width="2.2"/><path d="M0 9.5Q0 8.7.8 8.7H15.2Q16 8.7 16 9.5V19q0 .8-.8.8H.8Q0 19.8 0 19z" fill="#7db928"/></svg><div style="position:absolute;left:28px;top:15px"><svg width="20" height="20" viewBox="0 0 20 20"><circle cx="10" cy="10" r="10" fill="#7db928"/><path d="M4.3 10.2l4.3 4.3 7-7" fill="none" stroke="#fff" stroke-width="2.8"/></svg></div><div style="position:absolute;left:58px;top:15.5px"><svg width="20" height="19" viewBox="0 0 20 19"><path d="M3.75 9V1.2Q3.75.75 4.2.75H13.2L16.2 3.75V9" fill="none" stroke="#7db928" stroke-width="1.5"/><path d="M12.5.75V4.4H16.2z" fill="#7db928"/><path d="M0 10Q0 8.3 1.7 8.3H18.3Q20 8.3 20 10V15.4H16.7V13H3.3V15.4H0z" fill="#7db928"/><circle cx="17.5" cy="10" r=".65" fill="#fff"/><path d="M4.05 13V17.6Q4.05 18.25 4.7 18.25H15.3Q15.95 18.25 15.95 17.6V13" fill="none" stroke="#7db928" stroke-width="1.5"/></svg></div></div></div>
<div class="row" style="top:716px"><span class="c u" style="left:17px">R00000106</span><span class="c u t" style="left:204px;letter-spacing:.25px">LogicTrade</span><span class="c t" style="left:391px">Weth. Buitenhuiss...</span><span class="c" style="left:548px;letter-spacing:.15px">7951 SM</span><span class="c t" style="left:704px;letter-spacing:.3px">Staphorst</span><span class="c t" style="left:860px;letter-spacing:.55px">Nederland</span><span class="c ph" style="left:1016px;letter-spacing:0px">+31 (0)88 2400 100</span><span class="c num" style="left:1159px;width:157px">497,00</span><span class="c num" style="left:1315px;width:157px">0,00</span><div class="icos" style="left:1499px;width:90px"><svg style="left:0;top:15px" width="16" height="20" viewBox="0 0 16 20"><path d="M2.95 9.5V6.1A4.95 4.95 0 0 1 12.85 6.1V9.5" fill="none" stroke="#7db928" stroke-width="2.2"/><path d="M0 9.5Q0 8.7.8 8.7H15.2Q16 8.7 16 9.5V19q0 .8-.8.8H.8Q0 19.8 0 19z" fill="#7db928"/></svg><div style="position:absolute;left:28px;top:15px"><svg width="20" height="20" viewBox="0 0 20 20"><circle cx="10" cy="10" r="10" fill="#7db928"/><path d="M4.3 10.2l4.3 4.3 7-7" fill="none" stroke="#fff" stroke-width="2.8"/></svg></div><div style="position:absolute;left:58px;top:15.5px"><svg width="20" height="19" viewBox="0 0 20 19"><path d="M3.75 9V1.2Q3.75.75 4.2.75H13.2L16.2 3.75V9" fill="none" stroke="#7db928" stroke-width="1.5"/><path d="M12.5.75V4.4H16.2z" fill="#7db928"/><path d="M0 10Q0 8.3 1.7 8.3H18.3Q20 8.3 20 10V15.4H16.7V13H3.3V15.4H0z" fill="#7db928"/><circle cx="17.5" cy="10" r=".65" fill="#fff"/><path d="M4.05 13V17.6Q4.05 18.25 4.7 18.25H15.3Q15.95 18.25 15.95 17.6V13" fill="none" stroke="#7db928" stroke-width="1.5"/></svg></div></div></div>
<div class="row" style="top:766px"><span class="c u" style="left:17px">R00000183</span><span class="c u t" style="left:204px;letter-spacing:.25px">Berghuijs, R</span><span class="c t" style="left:391px">Teststraat 123</span><span class="c" style="left:548px;letter-spacing:.15px">1234AB</span><span class="c t" style="left:704px;letter-spacing:.3px">Testdorp</span><span class="c t" style="left:860px;letter-spacing:.55px">Nederland</span><span class="c ph" style="left:1016px;letter-spacing:.3px">0612345678</span><span class="c num" style="left:1159px;width:157px">1950,00</span><span class="c num" style="left:1315px;width:157px">0,00</span><div class="icos" style="left:1499px;width:90px"><svg style="left:0;top:15px" width="16" height="20" viewBox="0 0 16 20"><path d="M2.95 9.5V6.1A4.95 4.95 0 0 1 12.85 6.1V9.5" fill="none" stroke="#7db928" stroke-width="2.2"/><path d="M0 9.5Q0 8.7.8 8.7H15.2Q16 8.7 16 9.5V19q0 .8-.8.8H.8Q0 19.8 0 19z" fill="#7db928"/></svg><div style="position:absolute;left:28px;top:15px"><svg width="20" height="20" viewBox="0 0 20 20"><circle cx="10" cy="10" r="10" fill="#7db928"/><path d="M4.3 10.2l4.3 4.3 7-7" fill="none" stroke="#fff" stroke-width="2.8"/></svg></div><div style="position:absolute;left:58px;top:15.5px"><svg width="20" height="19" viewBox="0 0 20 19"><path d="M3.75 9V1.2Q3.75.75 4.2.75H13.2L16.2 3.75V9" fill="none" stroke="#7db928" stroke-width="1.5"/><path d="M12.5.75V4.4H16.2z" fill="#7db928"/><path d="M0 10Q0 8.3 1.7 8.3H18.3Q20 8.3 20 10V15.4H16.7V13H3.3V15.4H0z" fill="#7db928"/><circle cx="17.5" cy="10" r=".65" fill="#fff"/><path d="M4.05 13V17.6Q4.05 18.25 4.7 18.25H15.3Q15.95 18.25 15.95 17.6V13" fill="none" stroke="#7db928" stroke-width="1.5"/></svg></div></div></div>
<div class="row" style="top:816px"><span class="c u" style="left:17px">R00000179</span><span class="c u t" style="left:204px;letter-spacing:.25px">Berg, Kim van den</span><span class="c t" style="left:391px">Weth. Buitenhuiss...</span><span class="c" style="left:548px;letter-spacing:.15px">7951 SM</span><span class="c t" style="left:704px;letter-spacing:.3px">Staphorst</span><span class="c t" style="left:860px;letter-spacing:.55px">Nederland</span><span class="c num" style="left:1159px;width:157px">410,00</span><span class="c num" style="left:1315px;width:157px">0,00</span><div class="icos" style="left:1499px;width:90px"><svg style="left:0;top:15px" width="16" height="20" viewBox="0 0 16 20"><path d="M2.95 9.5V6.1A4.95 4.95 0 0 1 12.85 6.1V9.5" fill="none" stroke="#7db928" stroke-width="2.2"/><path d="M0 9.5Q0 8.7.8 8.7H15.2Q16 8.7 16 9.5V19q0 .8-.8.8H.8Q0 19.8 0 19z" fill="#7db928"/></svg><div style="position:absolute;left:28px;top:15px"><svg width="20" height="20" viewBox="0 0 20 20"><circle cx="10" cy="10" r="10" fill="#7db928"/><path d="M4.3 10.2l4.3 4.3 7-7" fill="none" stroke="#fff" stroke-width="2.8"/></svg></div><div style="position:absolute;left:58px;top:15.5px"><svg width="20" height="19" viewBox="0 0 20 19"><path d="M3.75 9V1.2Q3.75.75 4.2.75H13.2L16.2 3.75V9" fill="none" stroke="#7db928" stroke-width="1.5"/><path d="M12.5.75V4.4H16.2z" fill="#7db928"/><path d="M0 10Q0 8.3 1.7 8.3H18.3Q20 8.3 20 10V15.4H16.7V13H3.3V15.4H0z" fill="#7db928"/><circle cx="17.5" cy="10" r=".65" fill="#fff"/><path d="M4.05 13V17.6Q4.05 18.25 4.7 18.25H15.3Q15.95 18.25 15.95 17.6V13" fill="none" stroke="#7db928" stroke-width="1.5"/></svg></div></div></div>
<div class="row" style="top:866px"><span class="c u" style="left:17px">R00000179</span><span class="c u t" style="left:204px;letter-spacing:.25px">Berg, Kim van den</span><span class="c t" style="left:391px">Weth. Buitenhuiss...</span><span class="c" style="left:548px;letter-spacing:.15px">7951 SM</span><span class="c t" style="left:704px;letter-spacing:.3px">Staphorst</span><span class="c t" style="left:860px;letter-spacing:.55px">Nederland</span><span class="c num" style="left:1159px;width:157px">290,00</span><span class="c num" style="left:1315px;width:157px">0,00</span><div class="icos" style="left:1499px;width:90px"><svg style="left:0;top:15px" width="16" height="20" viewBox="0 0 16 20"><path d="M2.95 9.5V6.1A4.95 4.95 0 0 1 12.85 6.1V9.5" fill="none" stroke="#7db928" stroke-width="2.2"/><path d="M0 9.5Q0 8.7.8 8.7H15.2Q16 8.7 16 9.5V19q0 .8-.8.8H.8Q0 19.8 0 19z" fill="#7db928"/></svg><div style="position:absolute;left:28px;top:15px"><svg width="20" height="20" viewBox="0 0 20 20"><circle cx="10" cy="10" r="10" fill="#7db928"/><path d="M4.3 10.2l4.3 4.3 7-7" fill="none" stroke="#fff" stroke-width="2.8"/></svg></div><div style="position:absolute;left:58px;top:15.5px"><svg width="20" height="19" viewBox="0 0 20 19"><path d="M3.75 9V1.2Q3.75.75 4.2.75H13.2L16.2 3.75V9" fill="none" stroke="#7db928" stroke-width="1.5"/><path d="M12.5.75V4.4H16.2z" fill="#7db928"/><path d="M0 10Q0 8.3 1.7 8.3H18.3Q20 8.3 20 10V15.4H16.7V13H3.3V15.4H0z" fill="#7db928"/><circle cx="17.5" cy="10" r=".65" fill="#fff"/><path d="M4.05 13V17.6Q4.05 18.25 4.7 18.25H15.3Q15.95 18.25 15.95 17.6V13" fill="none" stroke="#7db928" stroke-width="1.5"/></svg></div></div></div>
<div class="row" style="top:916px"><span class="c u" style="left:17px">R00000182</span><span class="c u t" style="left:204px;letter-spacing:.25px">Vries, Tim de</span><span class="c t" style="left:397px">1</span><span class="c" style="left:548px;letter-spacing:.55px">1111AA</span><span class="c t" style="left:704px;letter-spacing:.3px"></span><span class="c t" style="left:860px;letter-spacing:.55px">Nederland</span><span class="c ph" style="left:1016px;letter-spacing:1.1px">0611111111</span><span class="c num" style="left:1159px;width:157px">3781,25</span><span class="c num" style="left:1315px;width:157px">3781,25</span><div class="icos" style="left:1499px;width:90px"><svg style="left:0;top:15px" width="16" height="20" viewBox="0 0 16 20"><path d="M2.95 9.5V6.1A4.95 4.95 0 0 1 12.85 6.1V9.5" fill="none" stroke="#7db928" stroke-width="2.2"/><path d="M0 9.5Q0 8.7.8 8.7H15.2Q16 8.7 16 9.5V19q0 .8-.8.8H.8Q0 19.8 0 19z" fill="#7db928"/></svg><div style="position:absolute;left:28px;top:15px"><svg width="20" height="20" viewBox="0 0 20 20"><circle cx="10" cy="10" r="10" fill="#7db928"/><path d="M4.3 10.2l4.3 4.3 7-7" fill="none" stroke="#fff" stroke-width="2.8"/></svg></div><div style="position:absolute;left:58px;top:15.5px"><svg width="20" height="19" viewBox="0 0 20 19"><path d="M3.75 9V1.2Q3.75.75 4.2.75H13.2L16.2 3.75V9" fill="none" stroke="#7db928" stroke-width="1.5"/><path d="M12.5.75V4.4H16.2z" fill="#7db928"/><path d="M0 10Q0 8.3 1.7 8.3H18.3Q20 8.3 20 10V15.4H16.7V13H3.3V15.4H0z" fill="#7db928"/><circle cx="17.5" cy="10" r=".65" fill="#fff"/><path d="M4.05 13V17.6Q4.05 18.25 4.7 18.25H15.3Q15.95 18.25 15.95 17.6V13" fill="none" stroke="#7db928" stroke-width="1.5"/></svg></div></div></div>
<div class="row" style="top:966px"><span class="c u" style="left:17px">R00000182</span><span class="c u t" style="left:204px;letter-spacing:.25px">Vries, Tim de</span><span class="c t" style="left:397px">1</span><span class="c" style="left:548px;letter-spacing:.55px">1111AA</span><span class="c t" style="left:704px;letter-spacing:.3px"></span><span class="c t" style="left:860px;letter-spacing:.55px">Nederland</span><span class="c ph" style="left:1016px;letter-spacing:1.1px">0611111111</span><span class="c num" style="left:1159px;width:157px">15125,00</span><span class="c num" style="left:1315px;width:157px">0,00</span><div class="icos" style="left:1499px;width:90px"><svg style="left:0;top:15px" width="16" height="20" viewBox="0 0 16 20"><path d="M2.95 9.5V6.1A4.95 4.95 0 0 1 12.85 6.1V9.5" fill="none" stroke="#7db928" stroke-width="2.2"/><path d="M0 9.5Q0 8.7.8 8.7H15.2Q16 8.7 16 9.5V19q0 .8-.8.8H.8Q0 19.8 0 19z" fill="#7db928"/></svg><div style="position:absolute;left:28px;top:15px"><svg width="20" height="20" viewBox="0 0 20 20"><circle cx="10" cy="10" r="10" fill="#7db928"/><path d="M4.3 10.2l4.3 4.3 7-7" fill="none" stroke="#fff" stroke-width="2.8"/></svg></div><div style="position:absolute;left:58px;top:15.5px"><svg width="20" height="19" viewBox="0 0 20 19"><path d="M3.75 9V1.2Q3.75.75 4.2.75H13.2L16.2 3.75V9" fill="none" stroke="#7db928" stroke-width="1.5"/><path d="M12.5.75V4.4H16.2z" fill="#7db928"/><path d="M0 10Q0 8.3 1.7 8.3H18.3Q20 8.3 20 10V15.4H16.7V13H3.3V15.4H0z" fill="#7db928"/><circle cx="17.5" cy="10" r=".65" fill="#fff"/><path d="M4.05 13V17.6Q4.05 18.25 4.7 18.25H15.3Q15.95 18.25 15.95 17.6V13" fill="none" stroke="#7db928" stroke-width="1.5"/></svg></div></div></div>
<div class="row" style="top:1016px"><span class="c u" style="left:17px">R00000179</span><span class="c u t" style="left:204px;letter-spacing:.25px">Berg, Kim van den</span><span class="c t" style="left:391px">Weth. Buitenhuiss...</span><span class="c" style="left:548px;letter-spacing:.15px">7951 SM</span><span class="c t" style="left:704px;letter-spacing:.3px">Staphorst</span><span class="c t" style="left:860px;letter-spacing:.55px">Nederland</span><span class="c num" style="left:1159px;width:157px">635,25</span><span class="c num" style="left:1315px;width:157px">0,00</span><div class="icos" style="left:1499px;width:90px"><svg style="left:0;top:15px" width="16" height="20" viewBox="0 0 16 20"><path d="M2.95 9.5V6.1A4.95 4.95 0 0 1 12.85 6.1V9.5" fill="none" stroke="#7db928" stroke-width="2.2"/><path d="M0 9.5Q0 8.7.8 8.7H15.2Q16 8.7 16 9.5V19q0 .8-.8.8H.8Q0 19.8 0 19z" fill="#7db928"/></svg><div style="position:absolute;left:28px;top:15px"><svg width="20" height="20" viewBox="0 0 20 20"><circle cx="10" cy="10" r="10" fill="#7db928"/><path d="M4.3 10.2l4.3 4.3 7-7" fill="none" stroke="#fff" stroke-width="2.8"/></svg></div><div style="position:absolute;left:58px;top:15.5px"><svg width="20" height="19" viewBox="0 0 20 19"><path d="M3.75 9V1.2Q3.75.75 4.2.75H13.2L16.2 3.75V9" fill="none" stroke="#7db928" stroke-width="1.5"/><path d="M12.5.75V4.4H16.2z" fill="#7db928"/><path d="M0 10Q0 8.3 1.7 8.3H18.3Q20 8.3 20 10V15.4H16.7V13H3.3V15.4H0z" fill="#7db928"/><circle cx="17.5" cy="10" r=".65" fill="#fff"/><path d="M4.05 13V17.6Q4.05 18.25 4.7 18.25H15.3Q15.95 18.25 15.95 17.6V13" fill="none" stroke="#7db928" stroke-width="1.5"/></svg></div></div></div>
<div class="row" style="top:1066px"><span class="c u" style="left:17px">R00000179</span><span class="c u t" style="left:204px;letter-spacing:.25px">Berg, Kim van den</span><span class="c t" style="left:391px">Weth. Buitenhuiss...</span><span class="c" style="left:548px;letter-spacing:.15px">7951 SM</span><span class="c t" style="left:704px;letter-spacing:.3px">Staphorst</span><span class="c t" style="left:860px;letter-spacing:.55px">Nederland</span><span class="c num" style="left:1159px;width:157px">3509,00</span><span class="c num" style="left:1315px;width:157px">0,00</span><div class="icos" style="left:1499px;width:90px"><svg style="left:0;top:15px" width="16" height="20" viewBox="0 0 16 20"><path d="M2.95 9.5V6.1A4.95 4.95 0 0 1 12.85 6.1V9.5" fill="none" stroke="#7db928" stroke-width="2.2"/><path d="M0 9.5Q0 8.7.8 8.7H15.2Q16 8.7 16 9.5V19q0 .8-.8.8H.8Q0 19.8 0 19z" fill="#7db928"/></svg><div style="position:absolute;left:28px;top:15px"><svg width="20" height="20" viewBox="0 0 20 20"><circle cx="10" cy="10" r="10" fill="#7db928"/><path d="M4.3 10.2l4.3 4.3 7-7" fill="none" stroke="#fff" stroke-width="2.8"/></svg></div><div style="position:absolute;left:58px;top:15.5px"><svg width="20" height="19" viewBox="0 0 20 19"><path d="M3.75 9V1.2Q3.75.75 4.2.75H13.2L16.2 3.75V9" fill="none" stroke="#7db928" stroke-width="1.5"/><path d="M12.5.75V4.4H16.2z" fill="#7db928"/><path d="M0 10Q0 8.3 1.7 8.3H18.3Q20 8.3 20 10V15.4H16.7V13H3.3V15.4H0z" fill="#7db928"/><circle cx="17.5" cy="10" r=".65" fill="#fff"/><path d="M4.05 13V17.6Q4.05 18.25 4.7 18.25H15.3Q15.95 18.25 15.95 17.6V13" fill="none" stroke="#7db928" stroke-width="1.5"/></svg></div></div></div>
<div class="row" style="top:1116px"><span class="c u" style="left:17px">R00000178</span><span class="c u t" style="left:204px;letter-spacing:.25px">Bosch, Joep uit den</span><span class="c t" style="left:391px">Wethouder Buiten...</span><span class="c" style="left:548px;letter-spacing:.15px">7951 SM</span><span class="c t" style="left:704px;letter-spacing:.3px">Staphorst</span><span class="c t" style="left:860px;letter-spacing:.55px">Nederland</span><span class="c num" style="left:1159px;width:157px">127,05</span><span class="c num" style="left:1315px;width:157px">0,00</span><div class="icos" style="left:1499px;width:90px"><svg style="left:0;top:15px" width="16" height="20" viewBox="0 0 16 20"><path d="M2.95 9.5V6.1A4.95 4.95 0 0 1 12.85 6.1V9.5" fill="none" stroke="#7db928" stroke-width="2.2"/><path d="M0 9.5Q0 8.7.8 8.7H15.2Q16 8.7 16 9.5V19q0 .8-.8.8H.8Q0 19.8 0 19z" fill="#7db928"/></svg><div style="position:absolute;left:28px;top:15px"><svg width="20" height="20" viewBox="0 0 20 20"><circle cx="10" cy="10" r="10" fill="#7db928"/><path d="M4.3 10.2l4.3 4.3 7-7" fill="none" stroke="#fff" stroke-width="2.8"/></svg></div><div style="position:absolute;left:58px;top:15.5px"><svg width="20" height="19" viewBox="0 0 20 19"><path d="M3.75 9V1.2Q3.75.75 4.2.75H13.2L16.2 3.75V9" fill="none" stroke="#7db928" stroke-width="1.5"/><path d="M12.5.75V4.4H16.2z" fill="#7db928"/><path d="M0 10Q0 8.3 1.7 8.3H18.3Q20 8.3 20 10V15.4H16.7V13H3.3V15.4H0z" fill="#7db928"/><circle cx="17.5" cy="10" r=".65" fill="#fff"/><path d="M4.05 13V17.6Q4.05 18.25 4.7 18.25H15.3Q15.95 18.25 15.95 17.6V13" fill="none" stroke="#7db928" stroke-width="1.5"/></svg></div></div></div>
<div class="row" style="top:1166px"><span class="c u" style="left:17px">R00000179</span><span class="c u t" style="left:204px;letter-spacing:.25px">Berg, Kim van den</span><span class="c t" style="left:391px">Weth. Buitenhuiss...</span><span class="c" style="left:548px;letter-spacing:.15px">7951 SM</span><span class="c t" style="left:704px;letter-spacing:.3px">Staphorst</span><span class="c t" style="left:860px;letter-spacing:.55px">Nederland</span><span class="c num" style="left:1159px;width:157px">254,10</span><span class="c num" style="left:1315px;width:157px">0,00</span><div class="icos" style="left:1499px;width:90px"><svg style="left:0;top:15px" width="16" height="20" viewBox="0 0 16 20"><path d="M2.95 9.5V6.1A4.95 4.95 0 0 1 12.85 6.1V9.5" fill="none" stroke="#7db928" stroke-width="2.2"/><path d="M0 9.5Q0 8.7.8 8.7H15.2Q16 8.7 16 9.5V19q0 .8-.8.8H.8Q0 19.8 0 19z" fill="#7db928"/></svg><div style="position:absolute;left:28px;top:15px"><svg width="20" height="20" viewBox="0 0 20 20"><circle cx="10" cy="10" r="10" fill="#7db928"/><path d="M4.3 10.2l4.3 4.3 7-7" fill="none" stroke="#fff" stroke-width="2.8"/></svg></div><div style="position:absolute;left:58px;top:15.5px"><svg width="20" height="19" viewBox="0 0 20 19"><path d="M3.75 9V1.2Q3.75.75 4.2.75H13.2L16.2 3.75V9" fill="none" stroke="#7db928" stroke-width="1.5"/><path d="M12.5.75V4.4H16.2z" fill="#7db928"/><path d="M0 10Q0 8.3 1.7 8.3H18.3Q20 8.3 20 10V15.4H16.7V13H3.3V15.4H0z" fill="#7db928"/><circle cx="17.5" cy="10" r=".65" fill="#fff"/><path d="M4.05 13V17.6Q4.05 18.25 4.7 18.25H15.3Q15.95 18.25 15.95 17.6V13" fill="none" stroke="#7db928" stroke-width="1.5"/></svg></div></div></div>
<div class="abs" style="left:1910px;top:216px;width:5px;height:410px;border-radius:3px;background:#c6cdd6"></div>
<div class="abs" style="left:582px;top:1228px;width:1319px;height:7px;border-radius:4px;background:#c6cdd6"></div>
<svg class="abs" style="left:939px;top:1252px" width="22" height="22" viewBox="0 0 22 22"><path d="M10 2.5L3 11l7 8.5M19 2.5L12 11l7 8.5" fill="none" stroke="#8a9099" stroke-width="2.6"/></svg>
<svg class="abs" style="left:985px;top:1252px" width="14" height="22" viewBox="0 0 14 22"><path d="M11.5 2.5L4 11l7.5 8.5" fill="none" stroke="#8a9099" stroke-width="2.4"/></svg>
<div class="abs" style="left:1014px;top:1247px;width:87px;height:31px;background:#fff;border:1px solid #c2cad4"></div>
<div class="abs" style="left:1021px;top:1247px;height:31px;line-height:31px;font-size:16px;color:#222">1</div>
<svg class="abs" style="left:1083px;top:1259px" width="11" height="8" viewBox="0 0 11 8"><path d="M0 0h11L5.5 7.5z" fill="#333"/></svg>
<svg class="abs" style="left:1115px;top:1252px" width="14" height="22" viewBox="0 0 14 22"><path d="M2.5 2.5L10 11l-7.5 8.5" fill="none" stroke="#00306f" stroke-width="2.6"/></svg>
<svg class="abs" style="left:1154px;top:1252px" width="22" height="22" viewBox="0 0 22 22"><path d="M3 2.5L10 11l-7 8.5M12 2.5l7 8.5-7 8.5" fill="none" stroke="#00306f" stroke-width="2.8"/></svg>
<div class="abs" style="left:1188px;top:1236px;width:1px;height:55px;background:#e2e2e2"></div>
<div class="abs" style="left:1197px;top:1247px;height:31px;line-height:31px;font-size:15px;font-weight:700;color:#00306f;white-space:nowrap">1 - 50 van 58</div>
</body></html>
